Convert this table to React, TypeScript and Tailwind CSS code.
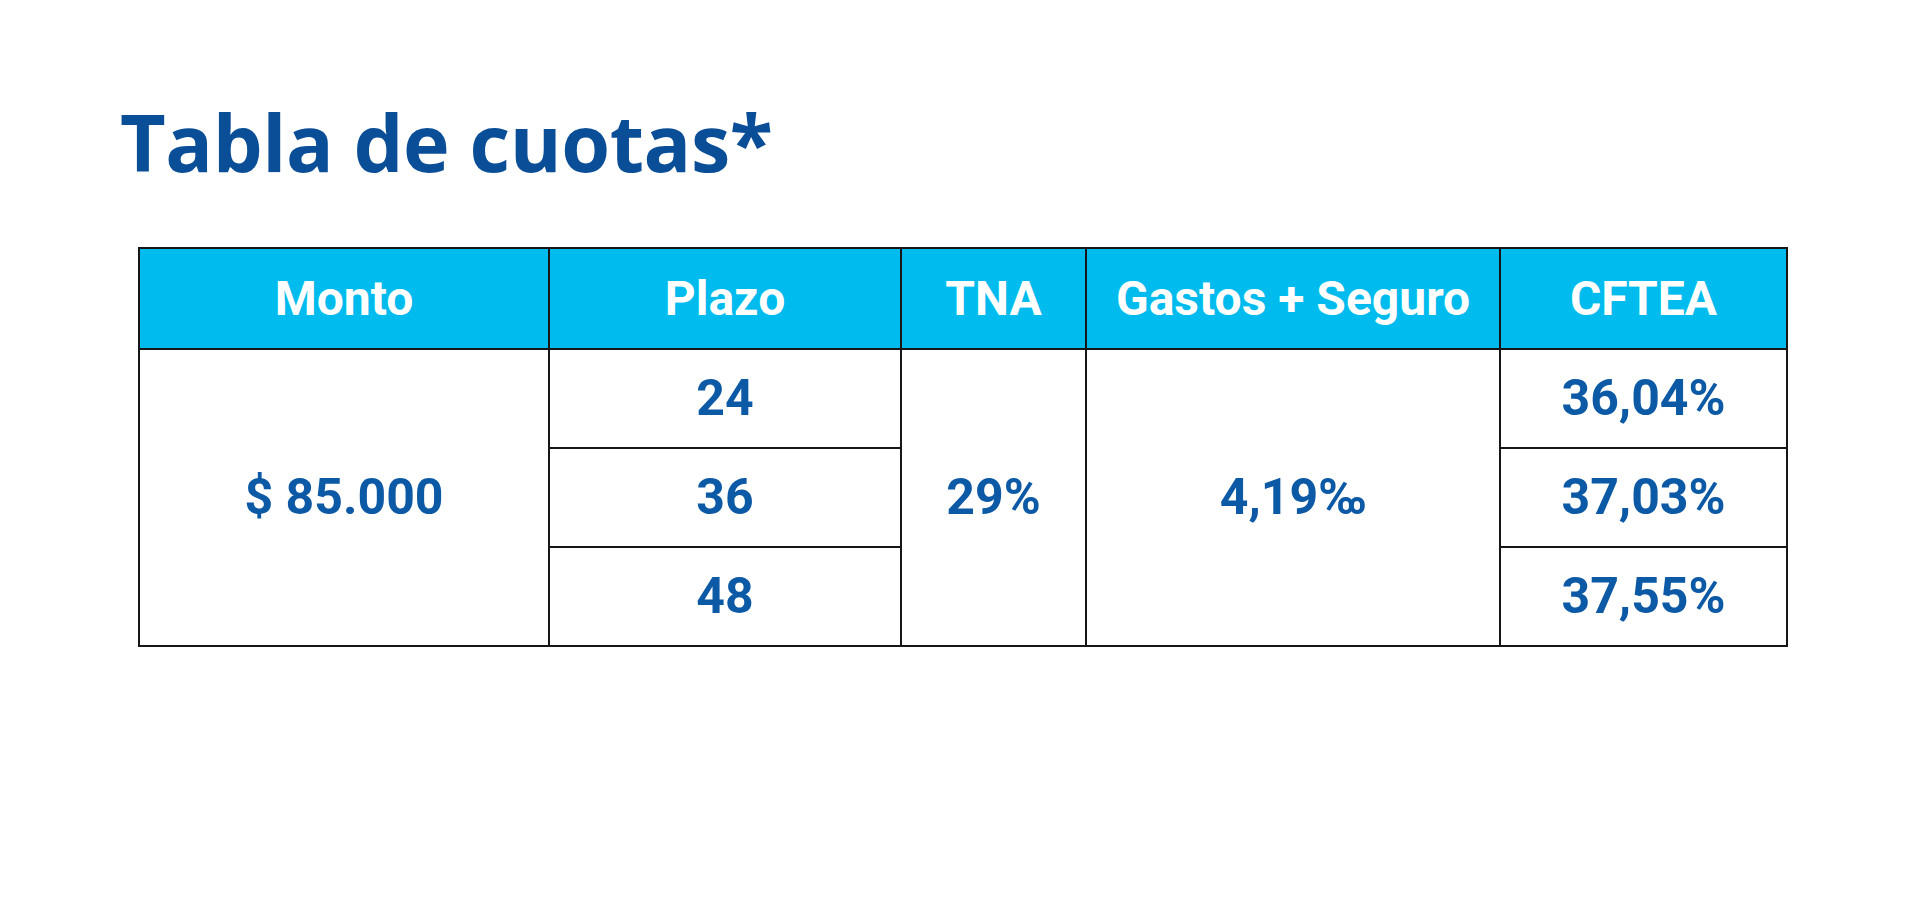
import React from "react";

const headers = ["Monto", "Plazo", "TNA", "Gastos + Seguro", "CFTEA"];

const rows = [
  { plazo: "24", cftea: "36,04%" },
  { plazo: "36", cftea: "37,03%" },
  { plazo: "48", cftea: "37,55%" },
];

const cell =
  "bg-white flex items-center justify-center text-[50px] font-bold text-[#0c59a5]";

const App = () => {
  return (
    <div className="min-h-screen bg-white pt-[102px] font-['Roboto',sans-serif]">
      <h1 className="ml-[120px] text-[79px] leading-none font-bold text-[#0a4e97] font-['Open_Sans',sans-serif] tracking-[-0.005em]">
        Tabla de cuotas*
      </h1>

      {/* tabla: el fondo negro hace de bordes */}
      <div className="ml-[138px] mt-[66px] inline-grid grid-cols-[408px_350px_183px_412px_285px] grid-rows-[99px_97px_97px_97px] gap-[2px] p-[2px] bg-[#161616]">
        {headers.map((h) => (
          <div
            key={h}
            className="bg-[#00bbed] flex items-center justify-center text-[48px] font-bold text-white"
          >
            {h}
          </div>
        ))}

        <div className={`${cell} row-span-3`}>$ 85.000</div>
        <div className={cell}>{rows[0].plazo}</div>
        <div className={`${cell} row-span-3`}>29%</div>
        <div className={`${cell} row-span-3`}>4,19‰</div>
        <div className={cell}>{rows[0].cftea}</div>

        {rows.slice(1).map((r) => (
          <React.Fragment key={r.plazo}>
            <div className={`${cell} col-start-2`}>{r.plazo}</div>
            <div className={`${cell} col-start-5`}>{r.cftea}</div>
          </React.Fragment>
        ))}
      </div>
    </div>
  );
};

export default App;
